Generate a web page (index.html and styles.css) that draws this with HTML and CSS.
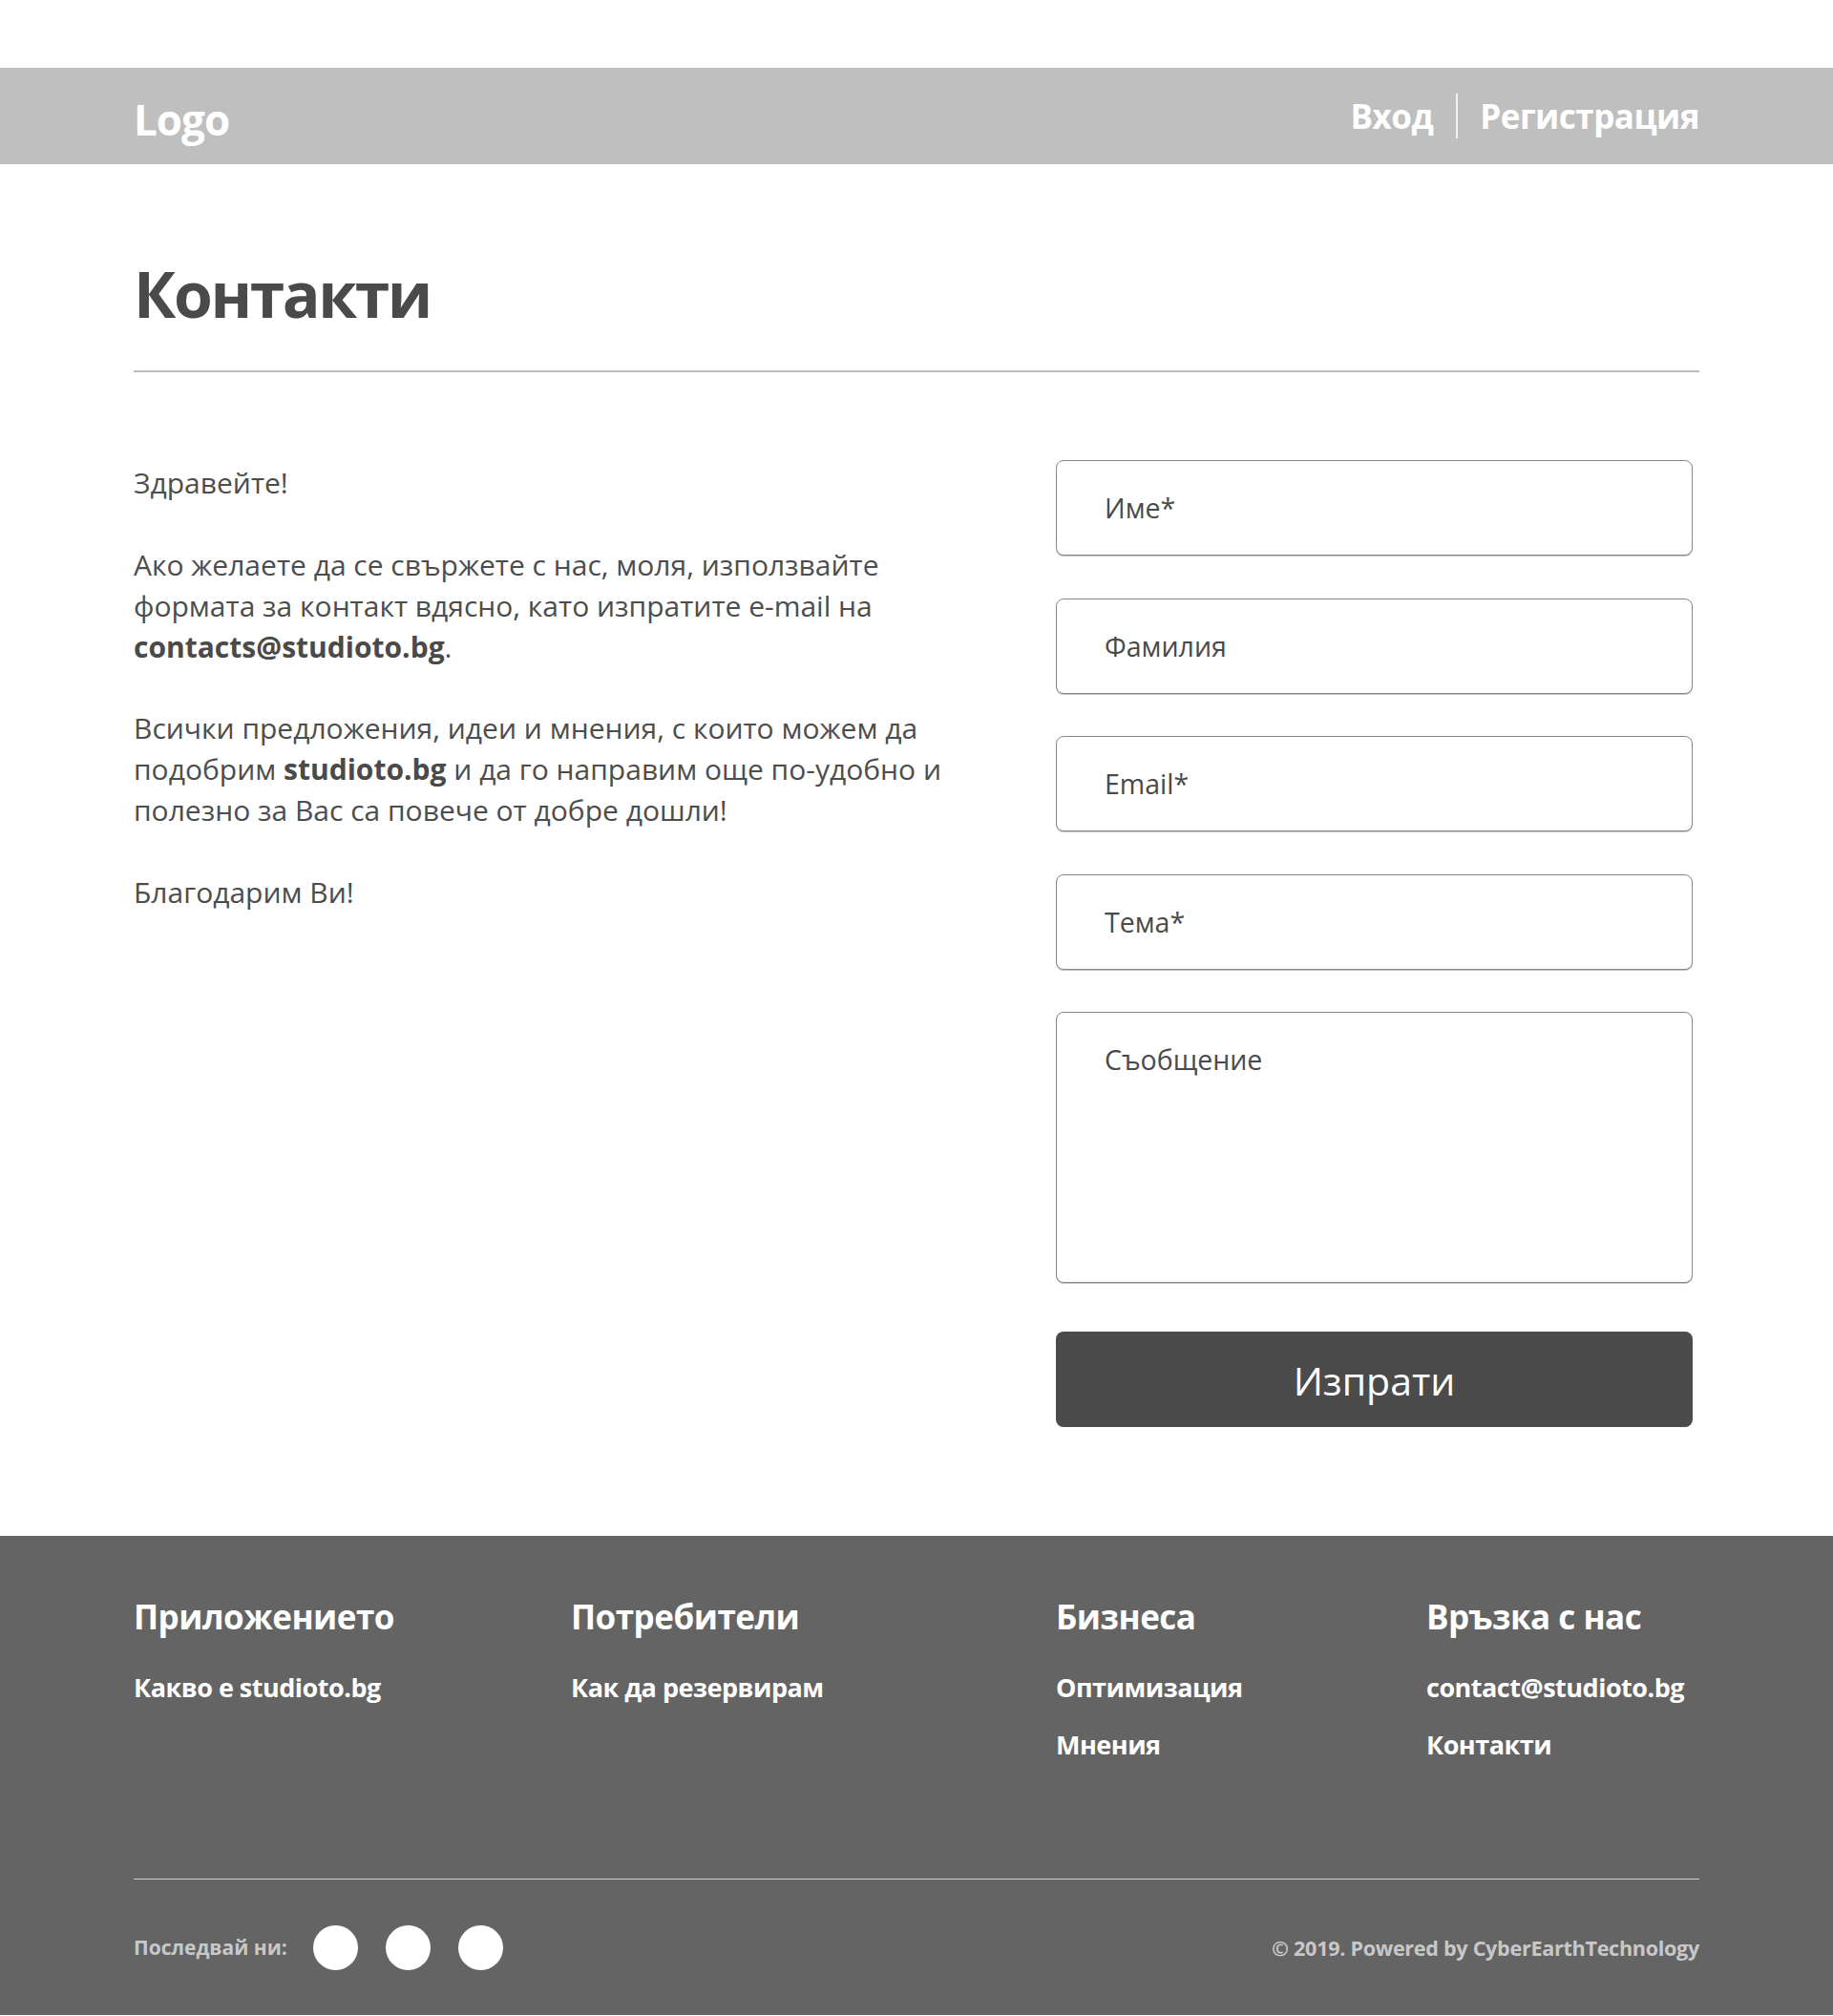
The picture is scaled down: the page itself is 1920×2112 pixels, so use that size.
FILE: index.html
```html
<!DOCTYPE html>
<html lang="bg">
<head>
<meta charset="utf-8">
<title>Контакти</title>
<link rel="stylesheet" href="styles.css">
</head>
<body>
<header class="site-header">
  <div class="container header-inner">
    <a class="logo" href="#">Logo</a>
    <nav class="auth">
      <a href="#">Вход</a>
      <span class="sep"></span>
      <a href="#">Регистрация</a>
    </nav>
  </div>
</header>

<main class="container">
  <h1 class="page-title">Контакти</h1>
  <section class="contact-row">
    <div class="intro">
      <p>Здравейте!</p>
      <p>Ако желаете да се свържете с нас, моля, използвайте формата за контакт вдясно, като изпратите e-mail на <strong>contacts@studioto.bg</strong>.</p>
      <p>Всички предложения, идеи и мнения, с които можем да подобрим <strong>studioto.bg</strong> и да го направим още по-удобно и полезно за Вас са повече от добре дошли!</p>
      <p>Благодарим Ви!</p>
    </div>
    <form class="form">
      <input class="field" type="text" placeholder="Име*">
      <input class="field" type="text" placeholder="Фамилия">
      <input class="field" type="email" placeholder="Email*">
      <input class="field" type="text" placeholder="Тема*">
      <textarea class="field message" placeholder="Съобщение"></textarea>
      <button class="submit" type="button">Изпрати</button>
    </form>
  </section>
</main>

<footer class="site-footer">
  <div class="container">
    <div class="footer-cols">
      <div class="footer-col">
        <h3>Приложението</h3>
        <a href="#">Какво е studioto.bg</a>
      </div>
      <div class="footer-col">
        <h3>Потребители</h3>
        <a href="#">Как да резервирам</a>
      </div>
      <div class="footer-col">
        <h3>Бизнеса</h3>
        <a href="#">Оптимизация</a>
        <a href="#">Мнения</a>
      </div>
      <div class="footer-col">
        <h3>Връзка с нас</h3>
        <a href="#">contact@studioto.bg</a>
        <a href="#">Контакти</a>
      </div>
    </div>
    <div class="footer-divider"></div>
    <div class="footer-bottom">
      <div class="follow">
        <span>Последвай ни:</span>
        <div class="socials">
          <a class="social" href="#"></a>
          <a class="social" href="#"></a>
          <a class="social" href="#"></a>
        </div>
      </div>
      <div class="copyright">© 2019. Powered by CyberEarthTechnology</div>
    </div>
  </div>
</footer>
</body>
</html>
```
FILE: styles.css
```css
* { box-sizing: border-box; }

body {
  margin: 0;
  font-family: "Open Sans", "Noto Sans", sans-serif;
  color: #4a4a4a;
  background: #fff;
}

a { text-decoration: none; color: inherit; }

.container {
  width: 1640px;
  margin: 0 auto;
}

/* Header */
.site-header {
  margin-top: 71px;
  height: 101px;
  background: #bfbfbf;
}
.header-inner {
  height: 100%;
  display: flex;
  align-items: center;
  justify-content: space-between;
}
.logo {
  font-size: 44px;
  font-weight: 700;
  color: #fff;
  letter-spacing: -1px;
  padding-top: 6px;
}
.auth {
  display: flex;
  align-items: center;
}
.auth a {
  font-size: 35px;
  font-weight: 700;
  color: #fff;
  letter-spacing: -0.5px;
}
.sep {
  width: 2px;
  height: 47px;
  background: #f2f2f2;
  margin: 0 23px 0 24px;
}

/* Title */
.page-title {
  margin: 100px 0 0;
  font-size: 66px;
  line-height: 70px;
  font-weight: 700;
  color: #4a4a4a;
  letter-spacing: -2.4px;
  padding-bottom: 46px;
  border-bottom: 2px solid #bdbdbd;
}

/* Content */
.contact-row {
  display: flex;
  justify-content: space-between;
  align-items: flex-start;
  margin-top: 92px;
}
.intro {
  width: 880px;
  padding-top: 2px;
  font-size: 30px;
  line-height: 43px;
  color: #4d4d4d;
}
.intro p { margin: 0 0 42.5px; }
.intro strong { font-weight: 700; color: #4a4a4a; }

.form {
  width: 667px;
  margin-right: 7px;
  display: flex;
  flex-direction: column;
  gap: 44.5px;
}
.field {
  display: block;
  width: 100%;
  height: 100px;
  border: 1px solid #888;
  border-radius: 8px;
  box-shadow: 0 1px 0 #c4c4c4;
  padding: 0 50px;
  font-family: "Open Sans", "Noto Sans", sans-serif;
  font-size: 28.5px;
  color: #4a4a4a;
  background: #fff;
  outline: none;
}
.field::placeholder { color: #4a4a4a; opacity: 1; }
.message {
  height: 284px;
  padding-top: 30px;
  resize: none;
}
.submit {
  height: 100px;
  margin-top: 6px;
  border: 0;
  border-radius: 8px;
  background: #4b4b4b;
  color: #fff;
  font-family: "Open Sans", "Noto Sans", sans-serif;
  font-size: 41px;
  padding-top: 4px;
  cursor: pointer;
}

/* Footer */
.site-footer {
  margin-top: 114px;
  background: #646464;
  color: #fff;
  padding: 63px 0 47px;
}
.footer-cols {
  display: grid;
  grid-template-columns: 458px 508px 388px auto;
}
.footer-col h3 {
  margin: 0 0 23px;
  font-size: 35px;
  line-height: 43px;
  font-weight: 700;
  letter-spacing: -0.5px;
}
.footer-col a {
  display: block;
  font-size: 27px;
  line-height: 60px;
  font-weight: 700;
  color: #fff;
  letter-spacing: -0.5px;
}
.footer-divider {
  margin-top: 110px;
  height: 1px;
  background: #cfcfcf;
}
.footer-bottom {
  margin-top: 48px;
  height: 47px;
  display: flex;
  align-items: center;
  justify-content: space-between;
}
.follow {
  display: flex;
  align-items: center;
  gap: 27px;
  font-size: 21px;
  font-weight: 700;
  color: #c8c8c8;
}
.socials {
  display: flex;
  gap: 29px;
}
.social {
  width: 47px;
  height: 47px;
  border-radius: 50%;
  background: #fff;
}
.copyright {
  font-size: 21.6px;
  font-weight: 700;
  color: #c8c8c8;
  letter-spacing: -0.3px;
}
```
